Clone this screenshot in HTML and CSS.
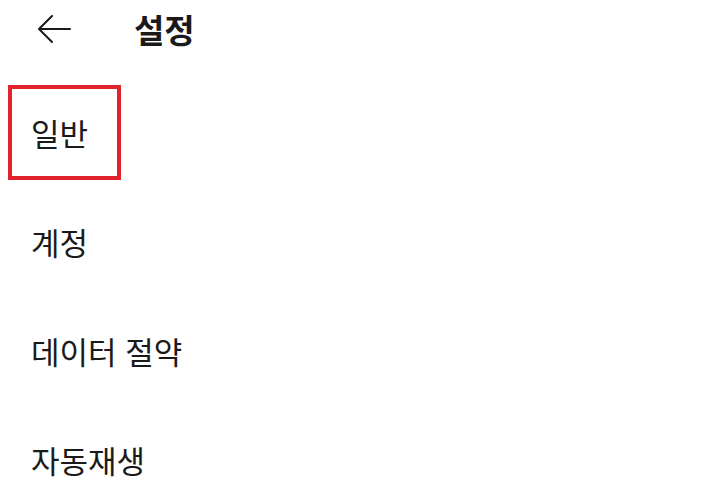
FILE: index.html
```html
<!DOCTYPE html>
<html lang="ko">
<head>
<meta charset="utf-8">
<link rel="stylesheet" href="styles.css">
</head>
<body>
<header class="topbar">
  <button class="back" aria-label="뒤로">
    <svg width="34" height="30" viewBox="0 0 34 30" fill="none" stroke="#1a1a1a" stroke-width="2" stroke-linecap="round" stroke-linejoin="round">
      <path d="M33 15 H2.5 M15 2 L2 15 L15 28"/>
    </svg>
  </button>
  <h1 class="title">설정</h1>
</header>
<ul class="menu">
  <li class="item"><span class="label highlighted">일반</span></li>
  <li class="item"><span class="label">계정</span></li>
  <li class="item"><span class="label">데이터 절약</span></li>
  <li class="item"><span class="label">자동재생</span></li>
</ul>
</body>
</html>
```
FILE: styles.css
```css
html, body {
  margin: 0;
  padding: 0;
  background: #ffffff;
}
body {
  width: 720px;
  height: 477px;
  overflow: hidden;
  font-family: "Noto Sans CJK KR", "Noto Sans", sans-serif;
  color: #1a1a1a;
}
.topbar {
  display: flex;
  align-items: center;
  height: 58px;
  padding-left: 37px;
}
.back {
  display: flex;
  align-items: center;
  justify-content: center;
  width: 34px;
  height: 30px;
  padding: 0;
  border: 0;
  background: none;
  margin-right: 63px;
}
.title {
  margin: 0;
  font-size: 33px;
  font-weight: 700;
  line-height: 1;
}
.menu {
  list-style: none;
  margin: 0;
  padding: 20px 0 0 31px;
}
.item {
  height: 109px;
  display: flex;
  align-items: center;
}
.label {
  font-size: 31px;
  line-height: 1;
  position: relative;
}
.highlighted::after {
  content: "";
  position: absolute;
  left: -23px;
  top: -32px;
  width: 105px;
  height: 87px;
  border: 4px solid #e3232c;
}
```
